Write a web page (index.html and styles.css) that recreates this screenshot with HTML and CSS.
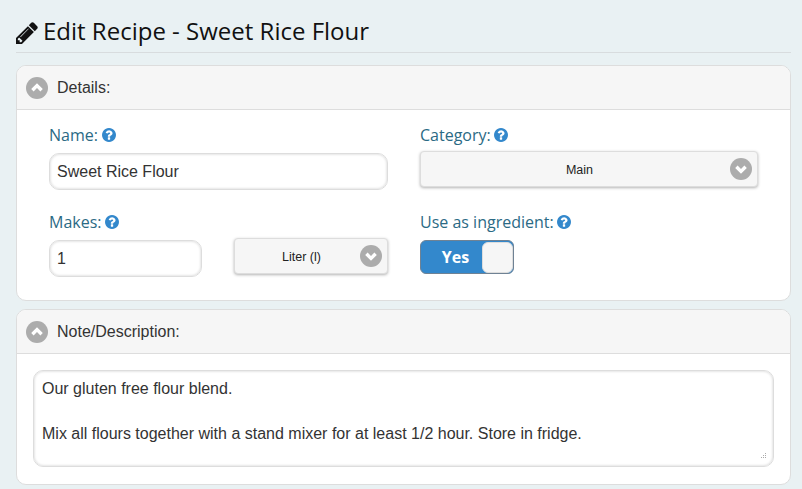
FILE: index.html
```html
<!DOCTYPE html>
<html lang="en">
<head>
<meta charset="utf-8">
<title>Edit Recipe - Sweet Rice Flour</title>
<link rel="stylesheet" href="styles.css">
</head>
<body>
<main class="page">
  <h1 class="title">
    <svg class="pencil" viewBox="128 128 1536 1536" aria-hidden="true"><path fill="#111" d="M491 1536l91-91-235-235-91 91v107h128v128h107zm523-928q0-22-22-22-10 0-17 7l-542 542q-7 7-7 17 0 22 22 22 10 0 17-7l542-542q7-7 7-17zm-54-192l416 416-832 832h-416v-416zm683 96q0 53-37 90l-166 166-416-416 166-165q36-38 90-38 53 0 91 38l235 234q37 39 37 91z"/></svg>
    <span>Edit Recipe - Sweet Rice Flour</span>
  </h1>

  <section class="panel">
    <header class="panel-head">
      <svg class="round-icon" viewBox="0 0 22 22" aria-hidden="true"><use href="#up"/></svg>
      <span>Details:</span>
    </header>
    <div class="details">
      <div class="field">
        <label class="label">Name: <svg class="help" aria-hidden="true"><use href="#q"/></svg></label>
        <input class="input" type="text" value="Sweet Rice Flour">
      </div>
      <div class="field">
        <label class="label">Category: <svg class="help" aria-hidden="true"><use href="#q"/></svg></label>
        <div class="select select-top">
          <span class="select-text">Main</span>
          <svg class="round-icon" viewBox="0 0 22 22" aria-hidden="true"><use href="#down"/></svg>
        </div>
      </div>
      <div class="field">
        <label class="label">Makes: <svg class="help" aria-hidden="true"><use href="#q"/></svg></label>
        <div class="makes">
          <input class="input input-short" type="text" value="1">
          <div class="select select-unit">
            <span class="select-text">Liter (l)</span>
            <svg class="round-icon" viewBox="0 0 22 22" aria-hidden="true"><use href="#down"/></svg>
          </div>
        </div>
      </div>
      <div class="field">
        <label class="label">Use as ingredient: <svg class="help" aria-hidden="true"><use href="#q"/></svg></label>
        <div class="toggle">
          <span class="toggle-text">Yes</span>
          <span class="toggle-knob"></span>
        </div>
      </div>
    </div>
  </section>

  <section class="panel">
    <header class="panel-head">
      <svg class="round-icon" viewBox="0 0 22 22" aria-hidden="true"><use href="#up"/></svg>
      <span>Note/Description:</span>
    </header>
    <div class="note">
      <div class="textarea-wrap">
        <textarea class="textarea">Our gluten free flour blend.

Mix all flours together with a stand mixer for at least 1/2 hour. Store in fridge.</textarea>
        <svg class="grip" viewBox="0 0 6 6" aria-hidden="true"><path fill="#aaa" d="M5 0h1v1H5zM3 2h1v1H3zM5 2h1v1H5zM1 4h1v1H1zM3 4h1v1H3zM5 4h1v1H5z"/></svg>
      </div>
    </div>
  </section>
</main>
<svg class="defs" aria-hidden="true">
  <symbol id="q" viewBox="128 128 1536 1536"><circle cx="896" cy="896" r="700" fill="#fff"/><path fill="#3388cc" d="M1024 1376v-192q0-14-9-23t-23-9h-192q-14 0-23 9t-9 23v192q0 14 9 23t23 9h192q14 0 23-9t9-23zm256-672q0-88-55.5-163t-138.5-116-170-41q-243 0-371 213-15 24 8 42l132 100q7 6 19 6 16 0 25-12 53-68 86-92 34-24 86-24 48 0 85.5 26t37.5 59q0 38-20 61t-68 45q-63 28-115.5 86.5t-52.5 125.5v36q0 14 9 23t23 9h192q14 0 23-9t9-23q0-19 21.5-49.5t54.5-49.5q32-18 49-28.5t46-35 44.5-48 28-60.5 12.5-81zm384 192q0 209-103 385.5t-279.5 279.5-385.5 103-385.5-103-279.5-279.5-103-385.5 103-385.5 279.5-279.5 385.5-103 385.5 103 279.5 279.5 103 385.5z"/></symbol>
  <symbol id="down" viewBox="0 0 22 22"><circle cx="11" cy="11" r="11" fill="#acacac"/><path d="M6.4 8.8 L11 13.4 L15.6 8.8" fill="none" stroke="#fff" stroke-width="3.4"/></symbol>
  <symbol id="up" viewBox="0 0 22 22"><circle cx="11" cy="11" r="11" fill="#acacac"/><path d="M6.4 13.2 L11 8.6 L15.6 13.2" fill="none" stroke="#fff" stroke-width="3.4"/></symbol>
</svg>
</body>
</html>
```
FILE: styles.css
```css
* { box-sizing: border-box; }
html, body { margin: 0; height: 489px; overflow: hidden; }
body { background: #e9f1f3; font-family: "Liberation Sans", Arial, sans-serif; color: #333; }
.page { padding: 16px 11px 0 16px; }
.defs { width: 0; height: 0; display: block; }
.title {
  display: flex; align-items: center; gap: 5px; margin: 0 0 12px; height: 37px; padding-bottom: 6px;
  border-bottom: 1px solid #d8dcde;
  font: 400 24px/30px "Open Sans", sans-serif; color: #111;
}
.pencil { width: 22px; height: 22px; flex: none; margin-top: 3px; }
.panel { background: #fff; border: 1px solid #ddd; border-radius: 10px; margin-bottom: 8px; overflow: hidden; }
.panel-head {
  display: flex; align-items: center; gap: 9px; height: 44px; padding: 0 9px;
  background: #f6f6f6; border-bottom: 1px solid #ddd;
  font-size: 16px; color: #333;
}
.round-icon { width: 22px; height: 22px; flex: none; }
.details { display: grid; grid-template-columns: 339px 338px; column-gap: 32px; row-gap: 21px; padding: 14px 32px 23px; }
.field { display: flex; flex-direction: column; }
.label { display: block; height: 29px; font: 400 16px/22px "Open Sans", sans-serif; color: #2b6a85; }
.help { width: 14px; height: 14px; vertical-align: -1px; margin-left: -0.5px; }
.input {
  display: block; width: 100%; height: 37px; padding: 0 7px;
  background: #fff; border: 1px solid #ddd; border-radius: 10px;
  box-shadow: inset 0 0 3px rgba(0,0,0,.2);
  font: 16px "Liberation Sans", Arial, sans-serif; color: #333; outline: none;
}
.input-short { width: 153px; flex: none; }
.select {
  display: flex; align-items: center; height: 36px; padding: 0 5px 0 8px;
  background: #f6f6f6; border: 1px solid #ddd; border-radius: 4px;
  box-shadow: 0 1px 3px rgba(0,0,0,.3);
  font-size: 12.5px; color: #222;
}
.select-top { margin-top: -2px; }
.select-unit { width: 154px; margin-top: -2px; }
.select-text { flex: 1; text-align: center; padding-top: 1px; }
.makes { display: flex; gap: 32px; align-items: flex-start; }
.toggle {
  display: flex; align-items: center; width: 94px; height: 34px;
  background: #3388cc; border: 1px solid #6f8294; border-radius: 6px;
  font: 700 16px "Open Sans", sans-serif; color: #fff;
}
.toggle-text { width: 60px; text-align: center; padding-left: 9px; }
.toggle-knob { width: 31px; height: 31px; margin-left: 1px; background: #f6f6f6; border: 1px solid #ddd; border-radius: 6px; }
.note { padding: 16px 16px 17px; }
.textarea-wrap { position: relative; width: 741px; }
.textarea {
  display: block; width: 741px; height: 97px; padding: 7px 8px;
  background: #fff; border: 1px solid #ddd; border-radius: 10px;
  box-shadow: inset 0 0 3px rgba(0,0,0,.2);
  font: 16px/22.5px "Liberation Sans", Arial, sans-serif; color: #333; outline: none; resize: none;
}
.grip { position: absolute; right: 8px; bottom: 8px; width: 6px; height: 6px; }
```
